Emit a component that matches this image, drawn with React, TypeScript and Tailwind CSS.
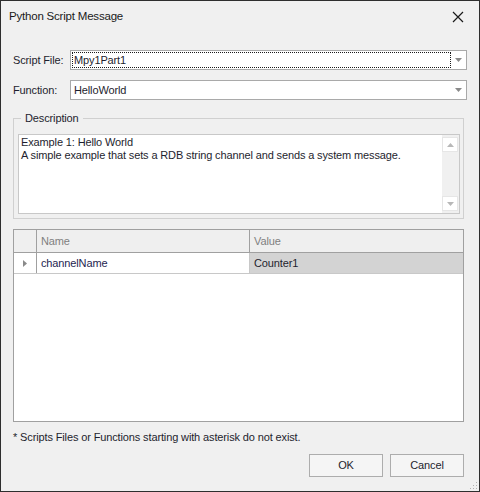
import React from "react";

const font = { fontFamily: '"Liberation Sans", Arial, sans-serif' };

function Arrow({ up = false, color = "#8a8a8a" }: { up?: boolean; color?: string }) {
  return (
    <svg width="7" height="4" viewBox="0 0 7 4">
      {up ? (
        <polygon points="0,4 7,4 3.5,0" fill={color} />
      ) : (
        <polygon points="0,0 7,0 3.5,4" fill={color} />
      )}
    </svg>
  );
}

function Combo({ value, focused = false }: { value: string; focused?: boolean }) {
  return (
    <div className="flex h-[20px] w-[397px] items-stretch border border-[#a9a9a9] bg-white">
      <div className="relative flex flex-1 items-center pl-[2px]">
        {focused && (
          <div className="absolute inset-[1px] right-[0px] border border-dotted border-[#1a1a1a]" />
        )}
        <span className="pl-[1px] text-[11px] text-[#1e1e2e]">{value}</span>
      </div>
      <div className="flex w-[15px] items-center justify-center">
        <Arrow />
      </div>
    </div>
  );
}

export default function App() {
  return (
    <div
      style={font}
      className="relative flex h-[492px] w-[480px] flex-col border border-[#2e2e2e] bg-[#f0f0f0] tracking-[-0.13px] text-[#1e1e2e]"
    >
      {/* title bar */}
      <div className="flex h-[31px] items-center justify-between pl-[8px] pr-[15px]">
        <span className="text-[11.5px] tracking-[-0.2px] text-[#1a1a1a]">Python Script Message</span>
        <svg width="12" height="12" viewBox="0 0 12 12">
          <path d="M1 1 L11 11 M11 1 L1 11" stroke="#1a1a1a" strokeWidth="1.2" />
        </svg>
      </div>

      <div className="flex flex-col pl-[12px] pt-[18px]">
        {/* Script File */}
        <div className="flex items-center">
          <span className="w-[57px] text-[11px]">Script File:</span>
          <Combo value="Mpy1Part1" focused />
        </div>
        <div className="mt-[10px] flex items-center">
          <span className="w-[57px] text-[11px]">Function:</span>
          <Combo value="HelloWorld" />
        </div>

        {/* Description group */}
        <div className="relative mt-[18px] h-[101px] w-[451px] border border-[#d0d0d0]">
          <span className="absolute left-[7px] top-[-8px] bg-[#f0f0f0] px-[4px] text-[11px] leading-[14px]">
            Description
          </span>
          <div className="absolute left-[4px] top-[15px] flex h-[80px] w-[442px] border border-[#c8c8c8] bg-white">
            <div className="flex-1 pl-[2px] pt-[1px] text-[11px] leading-[13px]">
              <div>Example 1: Hello World</div>
              <div>A simple example that sets a RDB string channel and sends a system message.</div>
            </div>
            <div className="flex w-[17px] flex-col justify-between bg-[#f0f0f0] py-[2px] pr-[1px]">
              <div className="flex h-[15px] w-[16px] items-center justify-center border border-[#e6e6e6] bg-white">
                <Arrow up color="#b8b8b8" />
              </div>
              <div className="flex h-[15px] w-[16px] items-center justify-center border border-[#e6e6e6] bg-white">
                <Arrow color="#b8b8b8" />
              </div>
            </div>
          </div>
        </div>

        {/* grid */}
        <div className="mt-[10px] flex h-[193px] w-[451px] flex-col border border-[#a0a0a0] bg-white">
          <div className="flex h-[23px] border-b border-[#a0a0a0] bg-[#efefef] text-[11px] text-[#808080]">
            <div className="w-[23px] border-r border-[#a0a0a0]" />
            <div className="flex w-[213px] items-center border-r border-[#a0a0a0] pl-[4px]">Name</div>
            <div className="flex flex-1 items-center pl-[4px]">Value</div>
          </div>
          <div className="flex h-[21px] border-b border-[#c8c8c8] text-[11px]">
            <div className="flex w-[23px] items-center justify-center border-r border-[#a0a0a0] bg-white">
              <svg width="4" height="7" viewBox="0 0 4 7">
                <polygon points="0,0 4,3.5 0,7" fill="#8a8a8a" />
              </svg>
            </div>
            <div className="flex w-[213px] items-center border-r border-[#c8c8c8] pl-[4px] text-[#1e1e50]">
              channelName
            </div>
            <div className="flex flex-1 items-center bg-[#d3d3d3] pl-[4px] text-[#1e1e2e]">Counter1</div>
          </div>
        </div>

        <div className="mt-[8px] text-[11px] leading-[14px]">
          * Scripts Files or Functions starting with asterisk do not exist.
        </div>

        <div className="mt-[10px] flex w-[451px] justify-end gap-[7px]">
          <button className="h-[23px] w-[74px] border border-[#adadad] bg-[#f5f5f5] text-[11px]">OK</button>
          <button className="h-[23px] w-[74px] border border-[#adadad] bg-[#f5f5f5] text-[11px]">Cancel</button>
        </div>
      </div>

      {/* resize grip */}
      <svg className="absolute bottom-[1px] right-[1px]" width="8" height="8" viewBox="0 0 8 8">
        <rect x="6" y="0" width="1" height="1" fill="#b0b0b0" />
        <rect x="3" y="3" width="1" height="1" fill="#b0b0b0" />
        <rect x="6" y="3" width="1" height="1" fill="#b0b0b0" />
        <rect x="0" y="6" width="1" height="1" fill="#b0b0b0" />
        <rect x="3" y="6" width="1" height="1" fill="#b0b0b0" />
        <rect x="6" y="6" width="1" height="1" fill="#b0b0b0" />
      </svg>
    </div>
  );
}
